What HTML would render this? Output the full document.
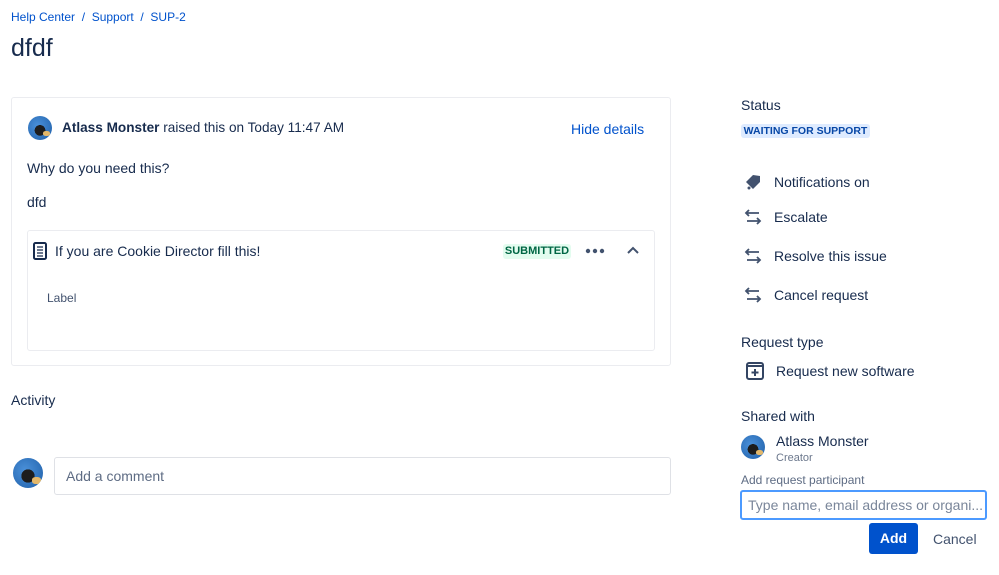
<!DOCTYPE html>
<html><head><meta charset="utf-8"><style>
*{box-sizing:border-box;margin:0;padding:0}
body{width:999px;height:575px;background:#fff;font-family:"Liberation Sans",sans-serif;color:#172b4d;position:relative;overflow:hidden;font-size:14px}
.a{position:absolute;white-space:nowrap}
.blue{color:#0052cc}
.av{position:absolute;border-radius:50%;background:radial-gradient(circle at 50% 60%,#1d1d1d 0 28%,transparent 29%),radial-gradient(circle at 40% 40%,#4a90d9,#1f5fa8);overflow:hidden}
.av:after{content:"";position:absolute;right:8%;bottom:15%;width:30%;height:22%;background:#e4b86a;border-radius:40%}
.ic{position:absolute}
</style></head><body>
<div class="a blue" style="left:11px;top:10px;font-size:12px">Help Center &nbsp;/&nbsp; Support &nbsp;/&nbsp; SUP-2</div>
<div class="a" style="left:11px;top:34px;font-size:25px">dfdf</div>

<div class="a" style="left:11px;top:97px;width:660px;height:269px;border:1px solid #ebecf0;border-radius:3px"></div>
<div class="av" style="left:28px;top:116px;width:24px;height:24px"></div>
<div class="a" style="left:62px;top:120px;font-size:13.6px"><b>Atlass Monster</b> raised this on Today 11:47 AM</div>
<div class="a blue" style="left:571px;top:121px;font-size:14px">Hide details</div>
<div class="a" style="left:27px;top:160px">Why do you need this?</div>
<div class="a" style="left:27px;top:194px">dfd</div>

<div class="a" style="left:27px;top:230px;width:628px;height:121px;border:1px solid #ebecf0;border-radius:3px"></div>
<svg class="ic" style="left:33px;top:242px" width="14" height="18" viewBox="0 0 14 18"><rect x="1" y="1" width="12" height="16" rx="1.5" fill="none" stroke="#172b4d" stroke-width="2"/><path d="M4 5h6M4 8h6M4 11h6M4 14h6" stroke="#172b4d" stroke-width="1.3"/></svg>
<div class="a" style="left:55px;top:243px">If you are Cookie Director fill this!</div>
<div class="a" style="left:503px;top:244px;width:68px;height:15px;background:#e3fcef;color:#006644;font-size:11px;font-weight:bold;text-align:center;line-height:15px;border-radius:3px">SUBMITTED</div>
<svg class="ic" style="left:585px;top:248px" width="20" height="6" viewBox="0 0 20 6"><circle cx="3" cy="3" r="2.2" fill="#42526e"/><circle cx="10" cy="3" r="2.2" fill="#42526e"/><circle cx="17" cy="3" r="2.2" fill="#42526e"/></svg>
<svg class="ic" style="left:627px;top:246px" width="12" height="8" viewBox="0 0 12 8"><path d="M1 7l5-5 5 5" fill="none" stroke="#42526e" stroke-width="2"/></svg>
<div class="a" style="left:47px;top:291px;font-size:12px;color:#42526e">Label</div>

<div class="a" style="left:11px;top:392px">Activity</div>
<div class="av" style="left:13px;top:458px;width:30px;height:30px"></div>
<div class="a" style="left:54px;top:457px;width:617px;height:38px;border:1px solid #dfe1e6;border-radius:3px;padding:10px 11px;color:#5e6c84">Add a comment</div>

<div class="a" style="left:741px;top:97px">Status</div>
<div class="a" style="left:741px;top:124px;width:129px;height:14px;background:#deebff;color:#0747a6;font-size:10.5px;font-weight:bold;line-height:14px;border-radius:3px;text-align:center">WAITING FOR SUPPORT</div>

<svg class="ic" style="left:744px;top:173px" width="18" height="18" viewBox="0 0 18 18"><path d="M2 9l7-7 7 1 0 6-7 7z" fill="#42526e"/><circle cx="5" cy="15" r="1.5" fill="#42526e"/></svg>
<div class="a" style="left:774px;top:174px">Notifications on</div>
<svg class="ic" style="left:744px;top:209px" width="18" height="16" viewBox="0 0 18 16"><path d="M15 4H2M5 1L2 4l3 3M3 12h13M13 9l3 3-3 3" fill="none" stroke="#42526e" stroke-width="1.8"/></svg>
<div class="a" style="left:774px;top:209px">Escalate</div>
<svg class="ic" style="left:744px;top:248px" width="18" height="16" viewBox="0 0 18 16"><path d="M15 4H2M5 1L2 4l3 3M3 12h13M13 9l3 3-3 3" fill="none" stroke="#42526e" stroke-width="1.8"/></svg>
<div class="a" style="left:774px;top:248px">Resolve this issue</div>
<svg class="ic" style="left:744px;top:287px" width="18" height="16" viewBox="0 0 18 16"><path d="M15 4H2M5 1L2 4l3 3M3 12h13M13 9l3 3-3 3" fill="none" stroke="#42526e" stroke-width="1.8"/></svg>
<div class="a" style="left:774px;top:287px">Cancel request</div>

<div class="a" style="left:741px;top:334px">Request type</div>
<svg class="ic" style="left:746px;top:362px" width="18" height="18" viewBox="0 0 18 18"><rect x="1" y="1" width="16" height="16" rx="2" fill="none" stroke="#344563" stroke-width="2"/><path d="M1 4h16" stroke="#344563" stroke-width="2"/><path d="M9 7v7M5.5 10.5h7" stroke="#344563" stroke-width="2"/></svg>
<div class="a" style="left:776px;top:363px">Request new software</div>

<div class="a" style="left:741px;top:408px">Shared with</div>
<div class="av" style="left:741px;top:435px;width:24px;height:24px"></div>
<div class="a" style="left:776px;top:433px">Atlass Monster</div>
<div class="a" style="left:776px;top:452px;font-size:11px;color:#6b778c">Creator</div>
<div class="a" style="left:741px;top:473px;font-size:12px;color:#5e6c84">Add request participant</div>
<div class="a" style="left:740px;top:490px;width:247px;height:30px;border:2px solid #4c9aff;border-radius:3px;padding:5px 6px;color:#7a869a">Type name, email address or organi...</div>
<div class="a" style="left:869px;top:523px;width:49px;height:31px;background:#0052cc;color:#fff;border-radius:3px;font-weight:bold;text-align:center;line-height:31px">Add</div>
<div class="a" style="left:933px;top:531px;color:#42526e">Cancel</div>
</body></html>
